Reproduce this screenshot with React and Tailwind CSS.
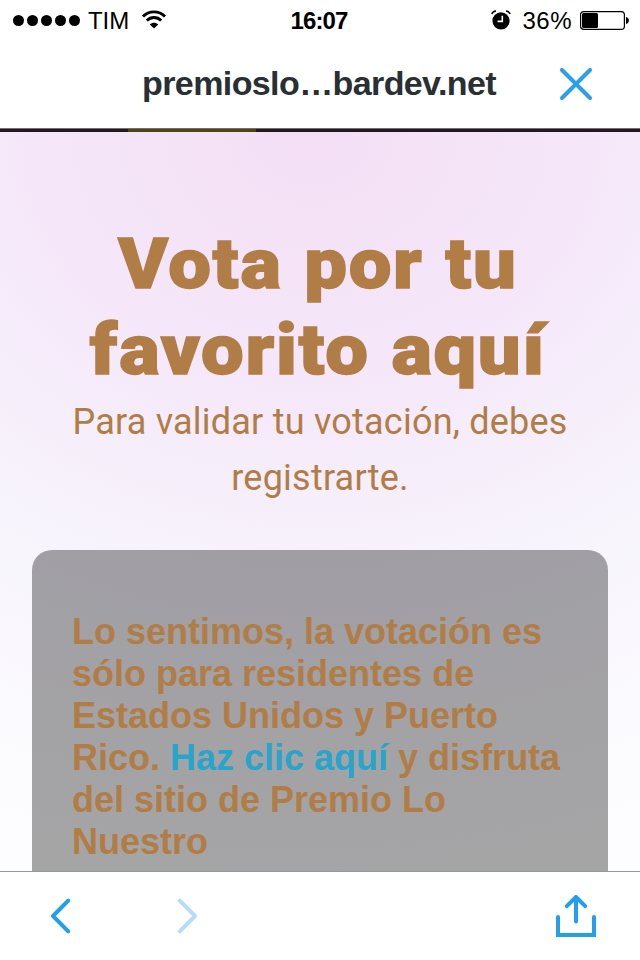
import React from 'react';

const StatusBar = () => (
    <div className="h-10 shrink-0 flex items-center justify-between pl-[13px] pr-[11px] text-black font-['Liberation_Sans']">
        <div className="w-[200px] flex items-center">
            <div className="flex gap-[3px]">
                {[0, 1, 2, 3, 4].map((dot) => (
                    <span key={dot} className="w-[11px] h-[11px] rounded-full bg-black" />
                ))}
            </div>
            <span className="ml-2 pt-px text-[24px] leading-10 tracking-[-0.1px]">TIM</span>
            <svg className="ml-3" width="26" height="20" viewBox="0 0 26 20" fill="none" stroke="#000" strokeWidth="2.8">
                <path d="M2 6.5C8 .3 18 .3 24 6.5" />
                <path d="M5.8 10.5C10 6.5 16 6.5 20.2 10.5" />
                <path d="M13 18.6L8.8 14.4C11.2 12.2 14.8 12.2 17.2 14.4Z" fill="#000" stroke="none" />
            </svg>
        </div>
        <span className="pr-1 pt-0.5 text-[24px] leading-10 font-bold tracking-[-0.9px]">16:07</span>
        <div className="w-[200px] flex items-center justify-end">
            <svg width="20" height="20" viewBox="0 0 20 20">
                <circle cx="10" cy="10.8" r="8.6" fill="#000" />
                <path d="M.8 4C1.6 2.2 3 1.2 5 1M19.2 4C18.4 2.2 17 1.2 15 1" fill="none" stroke="#000" strokeWidth="1.6" />
                <path d="M11.3 5.8V11.4H6.6" fill="none" stroke="#fff" strokeWidth="1.6" />
            </svg>
            <span className="ml-[11px] pt-0.5 text-[24px] leading-10 tracking-[0.5px]">36%</span>
            <svg className="ml-2" width="49" height="19" viewBox="0 0 49 19">
                <rect x=".6" y=".6" width="43.8" height="17.8" rx="3.2" fill="none" stroke="#000" strokeWidth="1.2" />
                <rect x="2" y="2" width="16" height="15" rx="1.5" fill="#000" />
                <path d="M46 6C49.8 6.5 49.8 12.5 46 13Z" fill="#000" />
            </svg>
        </div>
    </div>
);

const AddressBar = () => (
    <div className="h-[88px] shrink-0 grid grid-cols-[1fr_auto_1fr] items-center px-12">
        <span className="col-start-2 pb-0.5 pr-0.5 text-[34px] leading-[86px] font-bold text-[#292f33] font-['Liberation_Sans'] tracking-[-0.6px]">
            premioslo…bardev.net
        </span>
        <button className="justify-self-end" aria-label="Cerrar">
            <svg width="32" height="32" viewBox="0 0 32 32" fill="none" stroke="#2b9fe8" strokeWidth="4" strokeLinecap="round">
                <path d="M2 2L30 30M30 2L2 30" />
            </svg>
        </button>
    </div>
);

const Toolbar = () => (
    <div className="h-[89px] shrink-0 flex items-center border-t border-[#8f99a3] bg-white pl-[50px] pr-11">
        <svg width="22" height="36" viewBox="0 0 22 36" fill="none" stroke="#1fa0ee" strokeWidth="4" strokeLinecap="round" strokeLinejoin="round">
            <path d="M18.2 2.7L3 18L18.2 33.3" />
        </svg>
        <svg className="ml-[104px]" width="22" height="36" viewBox="0 0 22 36" fill="none" stroke="#b5ddf8" strokeWidth="4" strokeLinecap="round" strokeLinejoin="round">
            <path d="M3.8 2.7L19 18L3.8 33.3" />
        </svg>
        <svg className="ml-auto" width="40" height="43" viewBox="0 0 40 43" fill="none" stroke="#249fec" strokeWidth="4" strokeLinecap="round">
            <path d="M20 26.5V2M10.8 11.2L20 2L29.2 11.2" strokeLinejoin="round" />
            <path d="M2 22V40H38V22" />
        </svg>
    </div>
);

const App = () => {
    return (
        <div className="w-[640px] h-[960px] flex flex-col overflow-hidden bg-white">
            <StatusBar />
            <AddressBar />
            <div className="h-1 shrink-0 flex bg-[#24181f] border-t border-[#776e75]">
                <div className="ml-32 w-32 bg-[#51450d]" />
            </div>

            <main className="flex-1 min-h-0 overflow-hidden px-8 pt-[89px] text-[#b17d46] bg-[radial-gradient(ellipse_860px_740px_at_310px_0px,#f4dff5_0%,#f5e6f9_30%,#f6effb_50%,#f8f6fd_68%,#fdfdff_100%)]">
                <h1 className="pr-1 text-center text-[71px] leading-[86px] font-black font-['Roboto'] tracking-[1.6px] [word-spacing:1px] scale-x-[1.07] [-webkit-text-stroke:1.4px_#b17d46]">
                    Vota por tu
                    <br />
                    favorito aquí
                </h1>
                <p className="mt-px text-center text-[36px] leading-[56px] font-['Roboto'] tracking-[0.22px]">
                    Para validar tu votación, debes
                    <br />
                    registrarte.
                </p>

                <div className="mt-11 h-[420px] rounded-[20px] bg-black/35 px-10 pt-[61px]">
                    <p className="text-[36px] leading-[42px] font-bold font-['Liberation_Sans'] whitespace-nowrap">
                        Lo sentimos, la votación es
                        <br />
                        sólo para residentes de
                        <br />
                        Estados Unidos y Puerto
                        <br />
                        Rico. <a href="#" className="text-[#29a5cb]">Haz clic aquí</a> y disfruta
                        <br />
                        del sitio de Premio Lo
                        <br />
                        Nuestro
                    </p>
                </div>
            </main>

            <Toolbar />
        </div>
    );
};

export default App;
